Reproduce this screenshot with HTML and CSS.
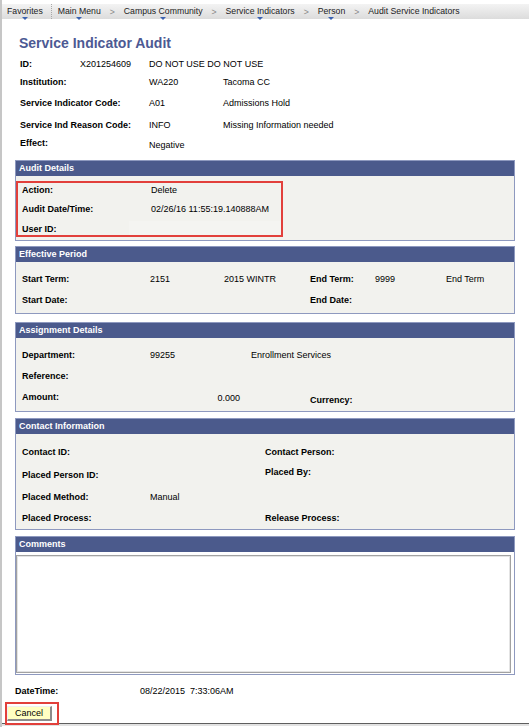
FILE: index.html
```html
<!DOCTYPE html>
<html>
<head>
  <meta charset="UTF-8">
  <title>Service Indicator Audit</title>
  <link rel="stylesheet" href="styles.css">
</head>
<body>
<nav class="navbar">
  <span class="nav-item has-menu">Favorites</span>
  <span class="nav-sep"></span>
  <span class="nav-item has-menu">Main Menu</span>
  <span class="nav-arrow">&gt;</span>
  <span class="nav-item has-menu">Campus Community</span>
  <span class="nav-arrow">&gt;</span>
  <span class="nav-item has-menu">Service Indicators</span>
  <span class="nav-arrow">&gt;</span>
  <span class="nav-item has-menu">Person</span>
  <span class="nav-arrow">&gt;</span>
  <span class="nav-item">Audit Service Indicators</span>
</nav>

<h1 class="page-title">Service Indicator Audit</h1>

<div class="info">
  <div class="info-row">
    <span class="label id-label">ID:</span>
    <span class="id-value">X201254609</span>
    <span>DO NOT USE DO NOT USE</span>
  </div>
  <div class="info-row">
    <span class="label info-label">Institution:</span>
    <span class="info-value">WA220</span>
    <span>Tacoma CC</span>
  </div>
  <div class="info-row spaced">
    <span class="label info-label">Service Indicator Code:</span>
    <span class="info-value">A01</span>
    <span>Admissions Hold</span>
  </div>
  <div class="info-row spaced-more">
    <span class="label info-label">Service Ind Reason Code:</span>
    <span class="info-value">INFO</span>
    <span>Missing Information needed</span>
  </div>
  <div class="info-row effect-row">
    <span class="label info-label">Effect:</span>
    <span class="effect-value">Negative</span>
  </div>
</div>

<div class="box audit-box">
  <div class="box-head">Audit Details</div>
  <div class="box-body">
    <div class="highlight">
      <div class="audit-row row-first">
        <span class="label col-label">Action:</span>
        <span>Delete</span>
      </div>
      <div class="audit-row row-mid">
        <span class="label col-label">Audit Date/Time:</span>
        <span>02/26/16 11:55:19.140888AM</span>
      </div>
      <div class="audit-row row-last">
        <span class="label col-label">User ID:</span>
        <span class="user-field"></span>
      </div>
    </div>
  </div>
</div>

<div class="box period-box">
  <div class="box-head">Effective Period</div>
  <div class="box-body">
    <div class="row">
      <span class="label col-label">Start Term:</span>
      <span class="w74">2151</span>
      <span class="w86">2015 WINTR</span>
      <span class="label w65">End Term:</span>
      <span class="w71">9999</span>
      <span>End Term</span>
    </div>
    <div class="row">
      <span class="label col-label">Start Date:</span>
      <span class="w160"></span>
      <span class="label w65">End Date:</span>
    </div>
  </div>
</div>

<div class="box assign-box">
  <div class="box-head">Assignment Details</div>
  <div class="box-body">
    <div class="row">
      <span class="label col-label">Department:</span>
      <span class="w101">99255</span>
      <span>Enrollment Services</span>
    </div>
    <div class="row">
      <span class="label col-label">Reference:</span>
    </div>
    <div class="row">
      <span class="label col-label">Amount:</span>
      <span class="amount">0.000</span>
      <span class="label currency">Currency:</span>
    </div>
  </div>
</div>

<div class="box contact-box">
  <div class="box-head">Contact Information</div>
  <div class="box-body">
    <div class="row h22">
      <span class="label wide-label">Contact ID:</span>
      <span class="label">Contact Person:</span>
    </div>
    <div class="row h24">
      <span class="label wide-label">Placed Person ID:</span>
      <span class="label raised">Placed By:</span>
    </div>
    <div class="row h20">
      <span class="label col-label">Placed Method:</span>
      <span>Manual</span>
    </div>
    <div class="row h22">
      <span class="label wide-label">Placed Process:</span>
      <span class="label">Release Process:</span>
    </div>
  </div>
</div>

<div class="box comments-box">
  <div class="box-head">Comments</div>
  <div class="box-body">
    <textarea class="comments-input"></textarea>
  </div>
</div>

<div class="datetime">
  <span class="label datetime-label">DateTime:</span>
  <span class="datetime-value">08/22/2015  7:33:06AM</span>
</div>

<div class="cancel-wrap">
  <button class="cancel-btn">Cancel</button>
</div>

<div class="status-strip"></div>
</body>
</html>
```

FILE: styles.css
```css
* {
  box-sizing: border-box;
}

html, body {
  margin: 0;
  padding: 0;
}

body {
  width: 529px;
  height: 727px;
  overflow: hidden;
  font-family: "Liberation Sans", Arial, sans-serif;
  font-size: 9px;
  color: #000;
  background: #fff;
  border-left: 2px solid #c6c6c6;
}

.label {
  font-weight: bold;
}

/* top breadcrumb bar */
.navbar {
  display: flex;
  align-items: center;
  margin-top: 4px;
  height: 15px;
  padding-left: 5px;
  background: linear-gradient(#f3f3f3, #dcdcdc);
  color: #222;
  font-size: 8.7px;
}

.nav-item {
  position: relative;
  line-height: 15px;
  white-space: nowrap;
}

.has-menu::after {
  content: "";
  position: absolute;
  left: 50%;
  bottom: -1px;
  margin-left: -3px;
  border-left: 3px solid transparent;
  border-right: 3px solid transparent;
  border-top: 3px solid #3a62b2;
}

.nav-sep {
  height: 15px;
  border-left: 1px dotted #a8a8a8;
  margin: 0 6px 0 8px;
}

.nav-arrow {
  color: #8a8a8a;
  margin: 0 9px;
}

.page-title {
  margin: 15px 0 0 17px;
  height: 18px;
  line-height: 18px;
  font-size: 14px;
  color: #4c5993;
}

/* key fields */
.info {
  margin: 3px 0 0 18px;
}

.info-row {
  display: flex;
  height: 18px;
  line-height: 18px;
}

.info-row.spaced {
  margin-top: 3px;
}

.info-row.spaced-more {
  margin-top: 4px;
}

.id-label {
  width: 60px;
}

.id-value {
  width: 69px;
}

.info-label {
  width: 129px;
}

.info-value {
  width: 74px;
}

.effect-row {
  height: 20px;
}

.effect-value {
  line-height: 23px;
}

/* group boxes */
.box {
  width: 500px;
  margin-left: 13px;
  border: 1px solid #8e99bf;
  background: #f2f2ee;
}

.box-head {
  height: 15px;
  line-height: 15px;
  padding-left: 3px;
  background: #4b5a8c;
  color: #fff;
  font-weight: bold;
}

.box-body {
  padding-left: 6px;
}

.row {
  display: flex;
  height: 21px;
  line-height: 21px;
}

.col-label {
  width: 128px;
}

.w65 { width: 65px; }
.w71 { width: 71px; }
.w74 { width: 74px; }
.w86 { width: 86px; }
.w101 { width: 101px; }
.w160 { width: 160px; }

.audit-box {
  margin-top: 6px;
}

.audit-box .box-body {
  padding: 5px 0 3px 0;
}

.highlight {
  width: 267px;
  height: 56px;
  border: 2px solid #e2403b;
  padding-left: 4px;
}

.audit-row {
  display: flex;
}

.audit-row .col-label {
  width: 129px;
}

.row-first {
  height: 14px;
  line-height: 14px;
}

.row-mid {
  height: 24px;
  line-height: 24px;
}

.row-last {
  height: 14px;
  line-height: 16px;
}

.user-field {
  width: 170px;
  margin-left: -8px;
  background: #f4f4f1;
}

.period-box {
  margin-top: 5px;
}

.period-box .box-body {
  padding-top: 7px;
  padding-bottom: 2px;
}

.assign-box {
  margin-top: 8px;
}

.assign-box .box-body {
  padding-top: 7px;
  padding-bottom: 3px;
}

.amount {
  width: 90px;
  text-align: right;
  line-height: 22px;
}

.currency {
  margin-left: 70px;
  line-height: 27px;
}

.contact-box {
  margin-top: 6px;
}

.contact-box .box-body {
  padding-top: 7px;
}

.wide-label {
  width: 243px;
}

.h20 { height: 20px; line-height: 20px; }
.h22 { height: 22px; line-height: 22px; }
.h24 { height: 24px; line-height: 24px; }

.raised {
  line-height: 18px;
}

.comments-box {
  margin-top: 6px;
}

.comments-box .box-body {
  padding: 3px 2px 1px 0;
  background: #fff;
}

.comments-input {
  display: block;
  width: 495px;
  height: 118px;
  margin: 0;
  border: 1px solid #a2a2a2;
  box-shadow: inset 0 0 0 1px #e4e4e4;
  background: #fff;
  resize: none;
}

/* footer */
.datetime {
  display: flex;
  margin: 7px 0 0 13px;
  height: 18px;
  line-height: 18px;
}

.datetime-label {
  width: 125px;
}

.datetime-value {
  white-space: pre;
}

.cancel-wrap {
  display: inline-block;
  margin: 2px 0 0 3px;
  padding: 2px 5px 2px 0;
  border: 2px solid #e2403b;
}

.cancel-btn {
  display: block;
  width: 45px;
  height: 15px;
  padding: 0;
  font-family: "Liberation Sans", Arial, sans-serif;
  font-size: 9px;
  color: #000;
  background: #ffffc2;
  border-top: 1px solid #f0f0f0;
  border-left: 1px solid #f0f0f0;
  border-right: 2px solid #8c8c8c;
  border-bottom: 2px solid #8c8c8c;
}

.status-strip {
  height: 3px;
  margin-top: -2px;
  border-top: 1px solid #5e5e5e;
  background: #e2e2e2;
}
```
